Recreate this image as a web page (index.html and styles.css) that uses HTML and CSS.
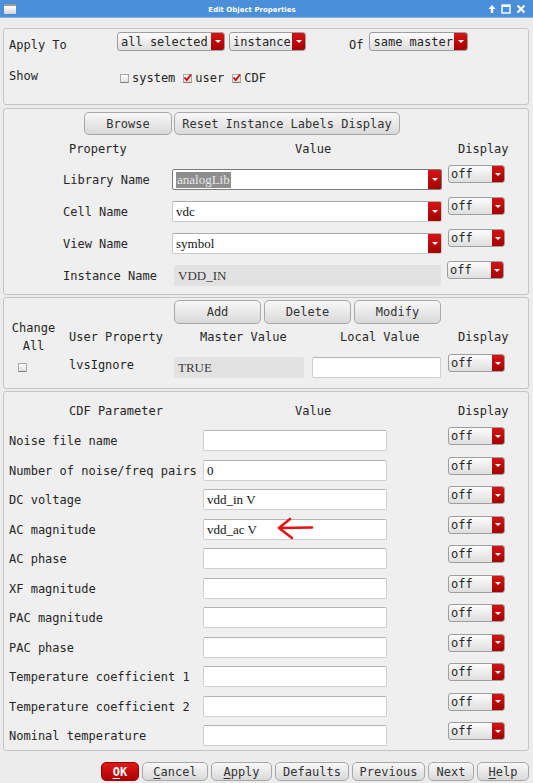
FILE: index.html
```html
<!DOCTYPE html>
<html>
<head>
<meta charset="utf-8">
<link rel="stylesheet" href="styles.css">
</head>
<body>
<div class="titlebar">
  <span class="win-icon"></span>
  <span class="title">Edit Object Properties</span>
  <span class="win-btns">
    <svg width="8" height="10" viewBox="0 0 8 10"><path d="M4 1 L7.5 5 H5.2 V9 H2.8 V5 H0.5 Z" fill="#fff"/></svg>
    <svg width="10" height="10" viewBox="0 0 10 10"><rect x="1" y="1" width="8" height="8" fill="none" stroke="#fff" stroke-width="1.4"/><rect x="1" y="1" width="8" height="2" fill="#fff"/></svg>
    <svg width="10" height="10" viewBox="0 0 10 10"><path d="M1.5 1.5 L8.5 8.5 M8.5 1.5 L1.5 8.5" stroke="#fff" stroke-width="2"/></svg>
  </span>
</div>

<div class="dialog">
  <section class="frame f1">
    <div class="r1">
      <span class="lbl apply">Apply To</span>
      <div class="dd w108"><span class="t">all selected</span><span class="arr"></span></div>
      <div class="dd w77 ml4"><span class="t">instance</span><span class="arr"></span></div>
      <span class="lbl of">Of</span>
      <div class="dd w99 ml6"><span class="t">same master</span><span class="arr"></span></div>
    </div>
    <div class="r2">
      <span class="lbl show">Show</span>
      <div class="checks">
        <span class="chk"><span class="box"></span>system</span>
        <span class="chk"><span class="box on"><svg viewBox="0 0 9 9" width="9" height="9"><path d="M1.5 4.5 L3.8 7 L8 1.5" fill="none" stroke="#d40000" stroke-width="1.8"/></svg></span>user</span>
        <span class="chk"><span class="box on"><svg viewBox="0 0 9 9" width="9" height="9"><path d="M1.5 4.5 L3.8 7 L8 1.5" fill="none" stroke="#d40000" stroke-width="1.8"/></svg></span>CDF</span>
      </div>
    </div>
  </section>

  <section class="frame f2">
    <div class="btnrow br2">
      <span class="btn w88">Browse</span>
      <span class="btn w226">Reset Instance Labels Display</span>
    </div>
    <div class="hdr h2">
      <span class="hc1">Property</span>
      <span class="hc2">Value</span>
      <span class="hc3">Display</span>
    </div>
    <div class="prow first">
      <span class="plbl">Library Name</span>
      <div class="combo focus"><span class="val"><span class="sel">analogLib</span></span><span class="arr"></span></div>
      <div class="dd off"><span class="t">off</span><span class="arr"></span></div>
    </div>
    <div class="prow">
      <span class="plbl">Cell Name</span>
      <div class="combo"><span class="val">vdc</span><span class="arr"></span></div>
      <div class="dd off"><span class="t">off</span><span class="arr"></span></div>
    </div>
    <div class="prow">
      <span class="plbl">View Name</span>
      <div class="combo"><span class="val">symbol</span><span class="arr"></span></div>
      <div class="dd off"><span class="t">off</span><span class="arr"></span></div>
    </div>
    <div class="prow">
      <span class="plbl">Instance Name</span>
      <div class="ro inst">VDD_IN</div>
      <div class="dd off inst-off"><span class="t">off</span><span class="arr"></span></div>
    </div>
  </section>

  <section class="frame f3">
    <div class="btnrow br3">
      <span class="btn w87">Add</span>
      <span class="btn w87">Delete</span>
      <span class="btn w87">Modify</span>
    </div>
    <div class="head3">
      <span class="chg">Change<br>All</span>
      <span class="up">User Property</span>
      <span class="mv">Master Value</span>
      <span class="lv">Local Value</span>
      <span class="dp">Display</span>
    </div>
    <div class="drow3">
      <span class="cbcell"><span class="box"></span></span>
      <span class="uname">lvsIgnore</span>
      <div class="ro master">TRUE</div>
      <div class="in local"></div>
      <div class="dd off ml7"><span class="t">off</span><span class="arr"></span></div>
    </div>
  </section>

  <section class="frame f4">
    <div class="hdr h4">
      <span class="c1">CDF Parameter</span>
      <span class="c2">Value</span>
      <span class="c3">Display</span>
    </div>
    <div class="plist">
      <div class="crow"><span class="clbl">Noise file name</span><div class="in cin"></div><div class="dd off"><span class="t">off</span><span class="arr"></span></div></div>
      <div class="crow"><span class="clbl">Number of noise/freq pairs</span><div class="in cin">0</div><div class="dd off"><span class="t">off</span><span class="arr"></span></div></div>
      <div class="crow"><span class="clbl">DC voltage</span><div class="in cin">vdd_in V</div><div class="dd off"><span class="t">off</span><span class="arr"></span></div></div>
      <div class="crow"><span class="clbl">AC magnitude</span><div class="in cin">vdd_ac V</div><div class="dd off"><span class="t">off</span><span class="arr"></span></div></div>
      <div class="crow"><span class="clbl">AC phase</span><div class="in cin"></div><div class="dd off"><span class="t">off</span><span class="arr"></span></div></div>
      <div class="crow"><span class="clbl">XF magnitude</span><div class="in cin"></div><div class="dd off"><span class="t">off</span><span class="arr"></span></div></div>
      <div class="crow"><span class="clbl">PAC magnitude</span><div class="in cin"></div><div class="dd off"><span class="t">off</span><span class="arr"></span></div></div>
      <div class="crow"><span class="clbl">PAC phase</span><div class="in cin"></div><div class="dd off"><span class="t">off</span><span class="arr"></span></div></div>
      <div class="crow"><span class="clbl">Temperature coefficient 1</span><div class="in cin"></div><div class="dd off"><span class="t">off</span><span class="arr"></span></div></div>
      <div class="crow"><span class="clbl">Temperature coefficient 2</span><div class="in cin"></div><div class="dd off"><span class="t">off</span><span class="arr"></span></div></div>
      <div class="crow"><span class="clbl">Nominal temperature</span><div class="in cin"></div><div class="dd off"><span class="t">off</span><span class="arr"></span></div></div>
    </div>
  </section>

  <div class="footer">
    <span class="btn fb ok"><u>O</u>K</span>
    <span class="btn fb w66"><u>C</u>ancel</span>
    <span class="btn fb w61"><u>A</u>pply</span>
    <span class="btn fb w74">Defaults</span>
    <span class="btn fb w73">Previous</span>
    <span class="btn fb w46">Next</span>
    <span class="btn fb w52"><u>H</u>elp</span>
  </div>
</div>

<svg class="annot" width="40" height="26" viewBox="0 0 40 26">
  <path d="M4 12 L37 11.5" stroke="#e31212" stroke-width="2.6" stroke-linecap="round" fill="none"/>
  <path d="M15 3 L4 12 L17 22" stroke="#e31212" stroke-width="2.6" stroke-linecap="round" stroke-linejoin="round" fill="none"/>
</svg>
</body>
</html>
```

FILE: styles.css
```css
* { box-sizing: border-box; }

html, body { margin: 0; padding: 0; }

body {
  width: 533px;
  height: 783px;
  overflow: hidden;
  position: relative;
  background: #ececec;
  font-family: "DejaVu Sans Mono", "Liberation Mono", monospace;
  font-size: 12px;
  color: #262626;
}

/* title bar */
.titlebar {
  height: 18px;
  background: #4a8fd8;
  display: flex;
  align-items: center;
  border-bottom: 1px solid #7fb0e6;
}
.win-icon {
  width: 12px;
  height: 10px;
  margin-left: 4px;
  border-radius: 1px;
  background: linear-gradient(#ffffff, #d4d4d4);
  border-top: 2px solid #9a9a9a;
}
.title {
  flex: 1;
  text-align: center;
  color: #fff;
  font-family: "DejaVu Sans", sans-serif;
  font-weight: bold;
  font-size: 7px;
  padding-top: 2px;
}
.win-btns {
  display: flex;
  align-items: center;
  gap: 5px;
  margin-right: 7px;
  padding-top: 1px;
}

/* dialog */
.dialog { padding: 0 4px 0 3px; }

.frame {
  border: 1px solid #c5c5c5;
  border-radius: 3px;
  background: #efefef;
}
.f1 { height: 77px; margin-top: 10px; padding: 3px 0 0 5px; }
.f2 { height: 187px; margin-top: 3px; padding-top: 3px; }
.f3 { height: 92px; margin-top: 2px; padding-top: 2px; }
.f4 { height: 360px; margin-top: 2px; padding-top: 10px; }

.lbl { white-space: nowrap; }

/* frame 1 */
.r1 { display: flex; align-items: flex-start; height: 19px; }
.apply { width: 108px; line-height: 19px; margin-top: 4px; }
.of { margin-left: 43px; line-height: 19px; margin-top: 4px; }
.r2 { display: flex; align-items: flex-start; margin-top: 17px; }
.show { width: 111px; line-height: 16px; }
.checks { display: flex; gap: 8px; margin-top: 2px; line-height: 16px; }
.chk { display: flex; align-items: center; gap: 3px; }

.box {
  width: 9px;
  height: 9px;
  border: 1px solid #a9a9a9;
  border-bottom-color: #7d7d7d;
  border-radius: 1px;
  background: linear-gradient(#ffffff, #dedede);
  display: inline-flex;
  align-items: center;
  justify-content: center;
  overflow: visible;
  position: relative;
}
.box svg { position: relative; top: -1px; left: 0; flex: none; }

/* dropdown */
.dd {
  display: flex;
  height: 19px;
  border: 1px solid #9e9e9e;
  border-radius: 3px;
  background: linear-gradient(#fcfcfc, #dedede);
  overflow: hidden;
  flex: none;
}
.dd .t { flex: 1; padding-left: 3px; line-height: 18px; white-space: nowrap; }
.arr {
  width: 13px;
  flex: none;
  background: linear-gradient(#d61414, #a40000);
  display: flex;
  align-items: center;
  justify-content: center;
}
.arr::after {
  content: "";
  border-left: 3px solid transparent;
  border-right: 3px solid transparent;
  border-top: 3px solid #ffffff;
}
.w108 { width: 108px; }
.w77 { width: 77px; }
.w99 { width: 99px; }
.ml4 { margin-left: 4px; }
.ml6 { margin-left: 6px; }
.ml7 { margin-left: 7px; }

.dd.off { width: 57px; height: 18px; }
.dd.off .t { line-height: 16px; padding-left: 2px; }
.dd.off .arr { width: 12px; }

/* buttons */
.btnrow { display: flex; }
.btn {
  display: flex;
  align-items: center;
  justify-content: center;
  border: 1px solid #a8a8a8;
  border-radius: 5px;
  background: linear-gradient(#f8f8f8, #d9d9d9);
  color: #333;
  white-space: nowrap;
}
.br2 { margin-left: 80px; gap: 2px; }
.br2 .btn { height: 23px; }
.w88 { width: 88px; }
.w226 { width: 226px; }
.br3 { margin-left: 170px; gap: 3px; }
.br3 .btn { height: 24px; }
.w87 { width: 87px; }

/* headers */
.hdr { display: flex; height: 16px; line-height: 16px; white-space: nowrap; }
.h2 { margin-top: 6px; }
.hc1 { margin-left: 65px; width: 226px; }
.hc2 { width: 163px; }
.h4 .c1 { margin-left: 65px; width: 226px; }
.h4 .c2 { width: 163px; }
.h4 { margin-top: 1px; }

/* frame 2 rows */
.prow { display: flex; align-items: flex-start; height: 32px; margin-left: 59px; }
.prow.first { margin-top: 8px; }
.plbl { width: 109px; line-height: 21px; margin-top: 5px; white-space: nowrap; }
.combo {
  width: 270px;
  height: 21px;
  margin-top: 4px;
  display: flex;
  background: #fff;
  border: 1px solid #c9c9c9;
  border-top-color: #aaaaaa;
  border-radius: 2px;
  overflow: hidden;
}
.combo.focus { border-color: #7a7a7a; }
.combo .val {
  flex: 1;
  font-family: "Liberation Serif", serif;
  font-size: 13px;
  line-height: 20px;
  padding-left: 3px;
  color: #111;
}
.combo .arr { width: 13px; }
.sel { background: #8e8e8e; color: #e8e8e8; padding: 0 1px 1px; }
.prow .dd.off { margin-left: 6px; }

.ro {
  height: 21px;
  background: #e2e2e2;
  border-radius: 2px;
  font-family: "Liberation Serif", serif;
  font-size: 13px;
  line-height: 22px;
  padding-left: 4px;
  color: #3a3a3a;
}
.inst { width: 267px; margin-left: 2px; margin-top: 4px; }
.prow .inst-off { margin-left: 7px; }

/* frame 3 */
.head3 {
  display: flex;
  align-items: center;
  height: 36px;
  margin-top: -5px;
  white-space: nowrap;
}
.chg { width: 59px; text-align: center; line-height: 18px; }
.up { width: 137px; padding-left: 6px; }
.mv { width: 140px; }
.lv { width: 118px; }
.drow3 { display: flex; align-items: flex-start; height: 24px; margin-top: -1px; }
.cbcell { width: 59px; padding-left: 14px; padding-top: 9px; display: flex; }
.uname { width: 111px; padding-left: 6px; line-height: 16px; margin-top: 3px; }
.master { width: 130px; margin-top: 3px; }
.in {
  height: 21px;
  background: #fff;
  border: 1px solid #d0d0d0;
  border-top-color: #b4b4b4;
  border-radius: 2px;
  font-family: "Liberation Serif", serif;
  font-size: 13px;
  line-height: 20px;
  padding-left: 3px;
  color: #111;
}
.local { width: 129px; margin-left: 8px; margin-top: 3px; }

/* frame 4 */
.plist { margin-top: 8px; }
.crow { display: flex; align-items: flex-start; height: 29.5px; }
.clbl { width: 199px; padding-left: 5px; line-height: 21px; margin-top: 4px; white-space: nowrap; }
.cin { width: 184px; margin-top: 3px; }
.crow .dd.off { margin-left: 61px; }

/* footer */
.footer {
  display: flex;
  justify-content: flex-end;
  gap: 3px;
  margin-top: 11px;
  padding-right: 0px;
}
.fb { height: 19px; border-radius: 5px; padding-top: 1px; }
.fb u { text-decoration: underline; text-underline-offset: 2px; }
.ok {
  width: 38px;
  background: linear-gradient(#dc1a1a, #b00000);
  border-color: #9a0000;
  color: #fff;
  font-weight: bold;
}
.w66 { width: 66px; }
.w61 { width: 61px; }
.w74 { width: 74px; }
.w73 { width: 73px; }
.w46 { width: 46px; }
.w52 { width: 52px; }

/* annotation */
.annot { position: absolute; left: 275px; top: 516px; }
```
